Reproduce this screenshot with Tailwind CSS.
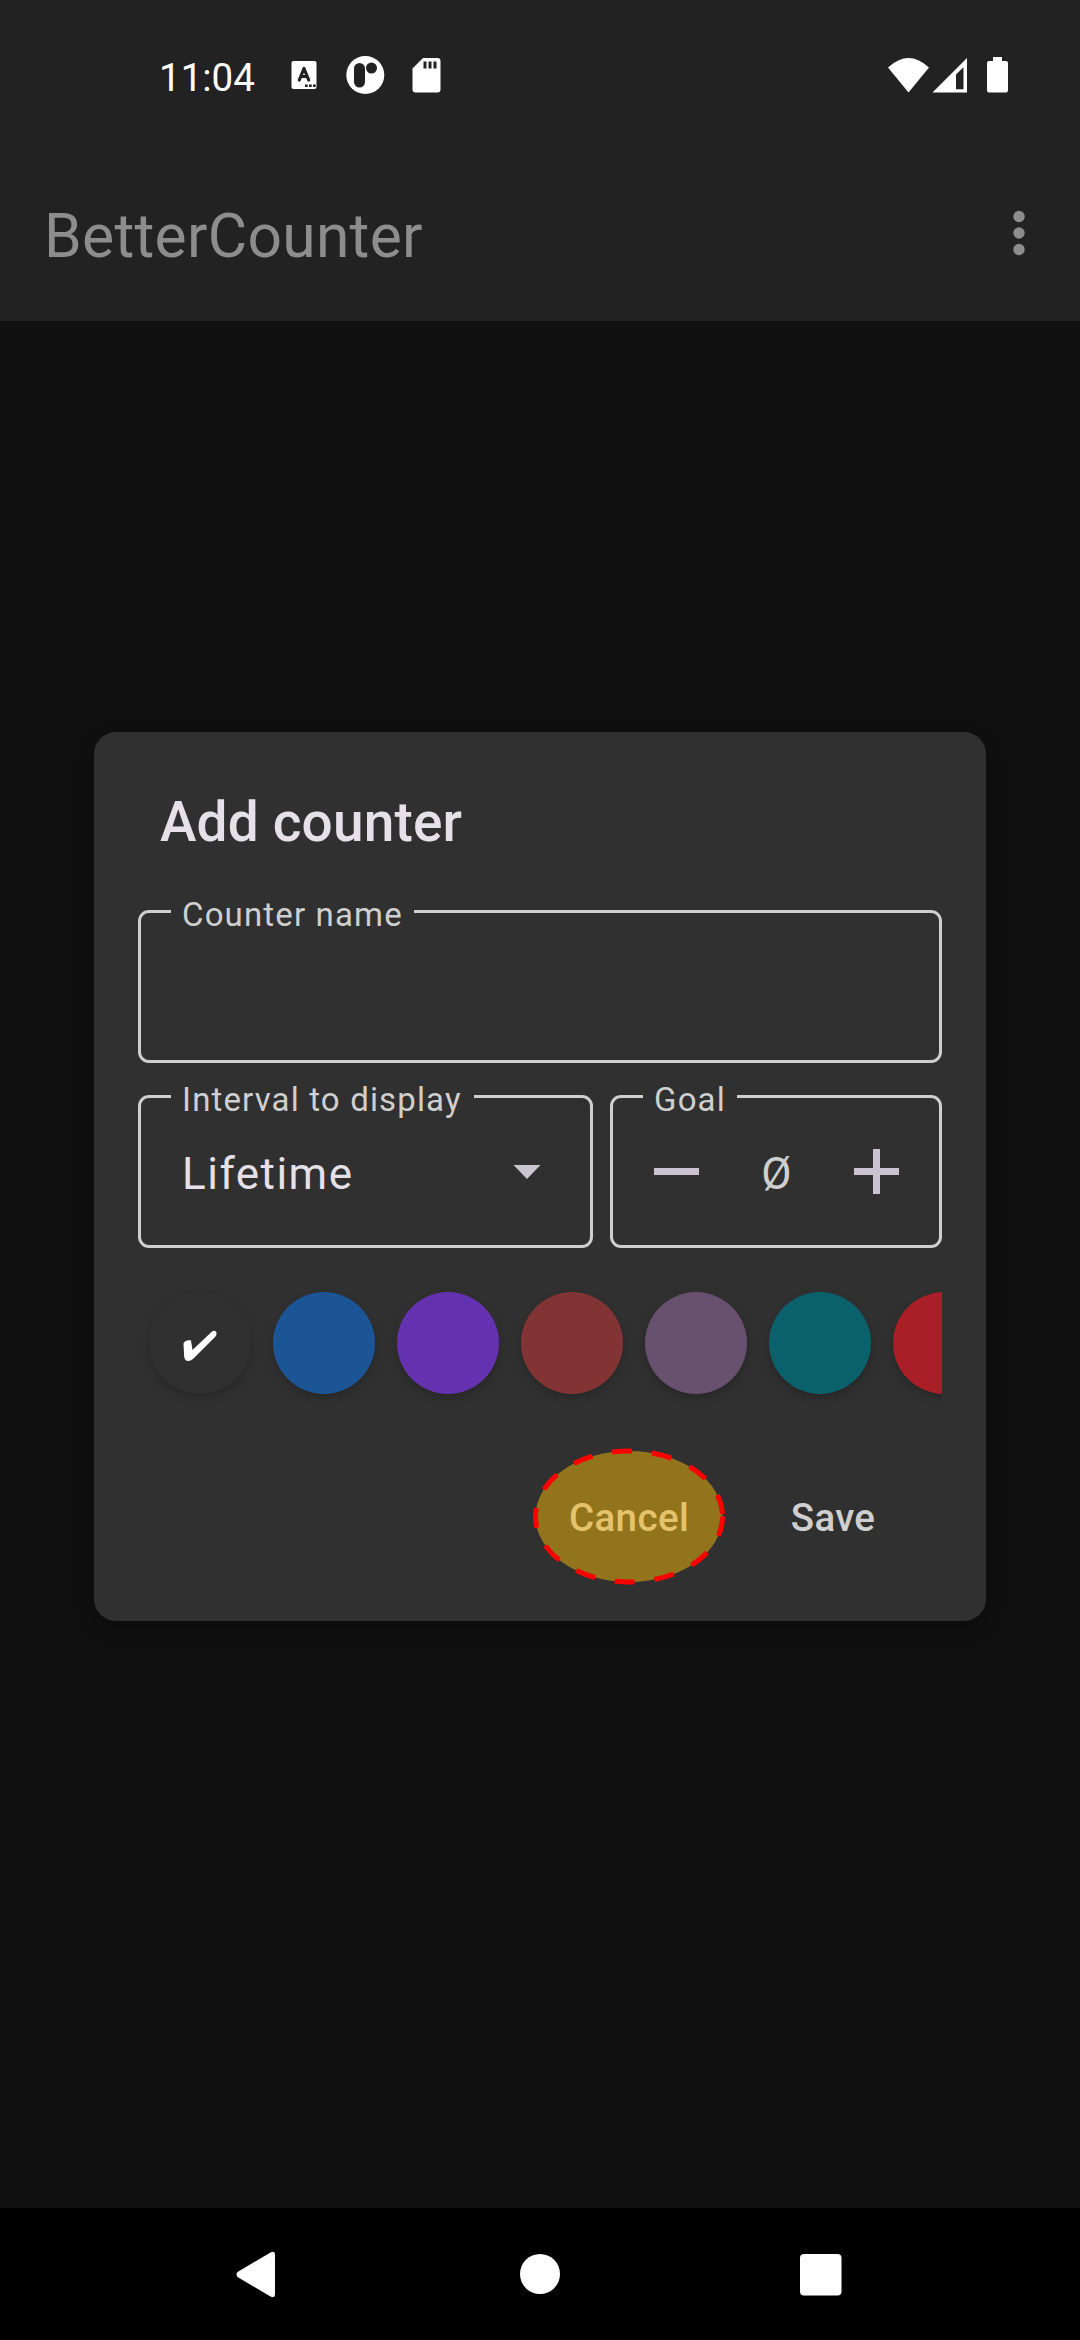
<!DOCTYPE html>
<html lang="en">
<head>
<meta charset="utf-8">
<title>BetterCounter</title>
<script src="https://cdn.jsdelivr.net/npm/@tailwindcss/browser@4"></script>
</head>
<body class="w-[1080px] h-[2340px] overflow-hidden bg-[#101010] font-[Roboto,sans-serif] relative flex flex-col">
  <header class="h-[321px] bg-[#222222] shrink-0 flex flex-col">
    <div class="h-[150px] flex items-center justify-between pl-[159px] pr-[70px] text-white">
      <div class="flex items-center">
        <span class="text-[38.5px] leading-[46px] w-[132px] mt-[6px]">11:04</span>
        <svg class="w-[150px] h-[40px]" viewBox="0 0 150 40" fill="#fff">
          <rect x=".5" y="6" width="25" height="28" rx="2"/>
          <path fill="none" stroke="#222" stroke-width="3.200" stroke-linecap="round" stroke-linejoin="round" d="M8.300 25L13 13.500 17.700 25M10 21.500h6"/>
          <path fill="#222" d="M14 29.500h2.700v2.500H14zM18 29.500h2.700v2.500H18zM22 29.500h2.700v2.500H22z"/>
          <circle cx="74.300" cy="20" r="19"/>
          <rect x="63" y="8" width="11" height="24.500" rx="5.500" fill="#222"/>
          <circle cx="80.500" cy="13" r="5.500" fill="#222"/>
          <path d="M132 3h14.500a3 3 0 0 1 3 3v28.500a3 3 0 0 1-3 3h-22a3 3 0 0 1-3-3V13.500z"/>
          <path fill="#222" d="M132.500 6.500h3v7h-3zM137.500 6.500h3v7h-3zM142.500 6.500h3v7h-3z"/>
        </svg>
      </div>
      <svg class="w-[122px] h-[40px]" viewBox="0 0 122 40" fill="#fff">
        <path d="M0 12.500Q20.500-6.500 41 12.500L20.500 37.500z"/>
        <path fill-rule="evenodd" d="M44.500 37.500L79 3v34.500zM68 34.300h7.500V12.300L68 19.500z"/>
        <path d="M105 2h9v4h4a2 2 0 0 1 2 2v27.500a2 2 0 0 1-2 2h-17a2 2 0 0 1-2-2V8a2 2 0 0 1 2-2h4z"/>
      </svg>
    </div>
    <div class="flex items-center justify-between h-[171px] pl-[44px] pr-[55px] pb-[5px] text-[#8d8d8d]">
      <h1 class="text-[60.5px] leading-[70px] tracking-[0.300px] pt-[7px]">BetterCounter</h1>
      <svg class="w-[12px] h-[46px]" viewBox="0 0 12 46" fill="currentColor"><circle cx="6" cy="6.500" r="5.700"/><circle cx="6" cy="23" r="5.700"/><circle cx="6" cy="39.500" r="5.700"/></svg>
    </div>
  </header>

  <main class="flex-1 pt-[411px] px-[94px]">
    <section class="h-[889px] bg-[#303030] rounded-[22px] shadow-[0_8px_20px_rgba(0,0,0,0.25)] px-[44px] flex flex-col">
      <h2 class="pt-[58px] pl-[22px] h-[178px] text-[55px] leading-[64px] tracking-[0.150px] font-medium text-[#e6e0e9]">Add counter</h2>

      <div class="relative h-[153px] border-3 border-[#cfcfcf] rounded-[11px] shrink-0">
        <label class="absolute left-[30px] -top-[18px] w-[243px] bg-[#303030] pl-[11px] text-[33px] leading-[40px] tracking-[1.150px] whitespace-nowrap text-[#cfcfcf]">Counter name</label>
      </div>

      <div class="flex gap-[17px] mt-[32px] shrink-0">
        <div class="relative w-[455px] h-[153px] border-3 border-[#cfcfcf] rounded-[11px] flex items-center justify-between pl-[41px] pr-[49px]">
          <label class="absolute left-[30px] -top-[18px] w-[303px] bg-[#303030] pl-[11px] text-[33px] leading-[40px] tracking-[1.150px] whitespace-nowrap text-[#cfcfcf]">Interval to display</label>
          <span class="text-[44px] leading-[52px] tracking-[1.500px] mt-[4px] text-[#e6e0e9]">Lifetime</span>
          <svg class="w-[28px] h-[14px]" viewBox="0 0 28 14"><path fill="#cac4d0" d="M.500 0h27L14 14z"/></svg>
        </div>
        <div class="relative w-[332px] h-[153px] border-3 border-[#cfcfcf] rounded-[11px] flex items-center justify-between pl-[41px] pr-[40px]">
          <label class="absolute left-[30px] -top-[18px] w-[94px] bg-[#303030] pl-[11px] text-[33px] leading-[40px] tracking-[1.150px] whitespace-nowrap text-[#cfcfcf]">Goal</label>
          <svg class="w-[45px] h-[45px]" viewBox="0 0 45 45"><path fill="#cac4d0" d="M0 19h45v7H0z"/></svg>
          <span class="text-[44px] leading-[52px] mt-[4px] text-[#cfcfcf]">Ø</span>
          <svg class="w-[45px] h-[45px]" viewBox="0 0 45 45"><path fill="#cac4d0" d="M0 19h19V0h7v19h19v7H26v19h-7V26H0z"/></svg>
        </div>
      </div>

      <div class="flex gap-[22px] pl-[11px] pt-[44px] h-[172px] overflow-hidden shrink-0">
        <div class="size-[102px] shrink-0 rounded-full bg-[#303030] shadow-[0_4px_8px_rgba(0,0,0,0.2)] flex items-center justify-center">
          <svg class="w-[34px] h-[32px] mt-[6px]" viewBox="0 0 34 32" fill="#fff"><path d="M.500 14C.500 11 6 9.500 8 10.500L9.500 20 29 1.500C30.500 0 34 .500 33.500 4 33.500 5 33 6 32 7L11 28C7 32 2 32 1.200 27z"/></svg>
        </div>
        <div class="size-[102px] shrink-0 rounded-full bg-[#1c5596] shadow-[0_4px_8px_rgba(0,0,0,0.2)]"></div>
        <div class="size-[102px] shrink-0 rounded-full bg-[#6432b0] shadow-[0_4px_8px_rgba(0,0,0,0.2)]"></div>
        <div class="size-[102px] shrink-0 rounded-full bg-[#823434] shadow-[0_4px_8px_rgba(0,0,0,0.2)]"></div>
        <div class="size-[102px] shrink-0 rounded-full bg-[#68506f] shadow-[0_4px_8px_rgba(0,0,0,0.2)]"></div>
        <div class="size-[102px] shrink-0 rounded-full bg-[#0b616b] shadow-[0_4px_8px_rgba(0,0,0,0.2)]"></div>
        <div class="size-[102px] shrink-0 rounded-full bg-[#aa1e27] shadow-[0_4px_8px_rgba(0,0,0,0.2)]"></div>
      </div>

      <div class="flex justify-end gap-[23px] pr-[22px] pt-[30px] text-[38.5px] font-medium">
        <button class="relative w-[188px] h-[132px] flex items-center justify-center">
          <svg class="absolute inset-0 w-[192px] h-[138px] overflow-visible" viewBox="0 0 192 138"><ellipse cx="94" cy="66.500" rx="93.500" ry="65.500" fill="#92741c" stroke="#f00" stroke-width="5" stroke-dasharray="20 20"/></svg>
          <span class="relative pt-[3px] tracking-[0.400px] text-[#e5c36d]">Cancel</span>
        </button>
        <button class="w-[174px] h-[132px] pt-[3px] tracking-[0.300px] text-[#cfcfcf]">Save</button>
      </div>
    </section>
  </main>

  <nav class="h-[132px] bg-black shrink-0">
    <svg class="w-full h-full" viewBox="0 0 1080 132" fill="#fff">
      <path d="M237.500 64L270.500 44.500Q275 42.500 275 46.500V86.500Q275 90.500 270.500 88.500L237.500 69Q235.500 66.500 237.500 64z"/>
      <circle cx="540" cy="66" r="20"/>
      <rect x="800" y="46" width="41.500" height="41.500" rx="4"/>
    </svg>
  </nav>
</body>
</html>
